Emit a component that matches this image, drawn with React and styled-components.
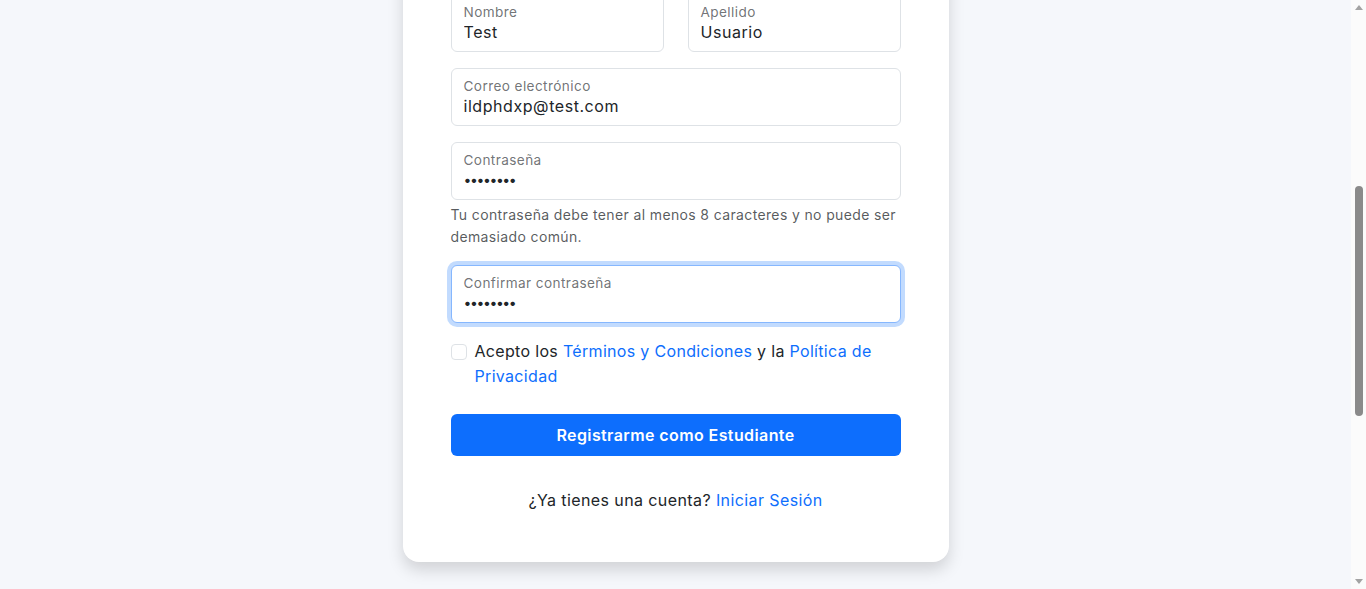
import React, { useEffect, useRef } from 'react';
import styled, { createGlobalStyle } from 'styled-components';

const GlobalStyle = createGlobalStyle`
    html, body {
        margin: 0;
        padding: 0;
    }
    body {
        background: #f5f7fb;
        color: #212529;
        font-family: "Inter", "Noto Sans", sans-serif;
        font-size: 16px;
        line-height: 1.6;
        letter-spacing: 0.02em;
    }
    *, *::before, *::after {
        box-sizing: border-box;
    }
`

const Page = styled.main`
    padding: 48px 15px 431px 0;
    display: flex;
    justify-content: center;
`

const Card = styled.div`
    width: 546px;
    background: #fff;
    border-radius: 16px;
    padding: 48px;
    box-shadow: 0 8px 16px rgba(0, 0, 0, 0.15);
`

const Header = styled.div`
    height: 320px;
    margin-bottom: 16px;
    display: flex;
    flex-direction: column;
    align-items: center;
    text-align: center;
`

const Logo = styled.div`
    width: 72px;
    height: 72px;
    border-radius: 50%;
    background: #e7f0ff;
    color: #0d6efd;
    display: flex;
    align-items: center;
    justify-content: center;
    margin: 24px 0 20px;
`

const Title = styled.h2`
    margin: 0 0 8px;
    font-size: 28px;
    font-weight: 600;
    line-height: 1.2;
`

const Subtitle = styled.p`
    margin: 0 0 24px;
    color: #6c757d;
`

const Pill = styled.span`
    padding: 6px 16px;
    border-radius: 999px;
    background: #e7f0ff;
    color: #0d6efd;
    font-size: 14px;
    font-weight: 500;
`

const Row = styled.div`
    display: grid;
    grid-template-columns: minmax(0, 1fr) minmax(0, 1fr);
    gap: 24px;
    margin-bottom: 16px;
`

const Field = styled.label`
    display: flex;
    flex-direction: column;
    min-width: 0;
    height: 58px;
    padding: 9px 12px 7px;
    border: 1px solid ${props => props.$focused ? '#86b7fe' : '#dee2e6'};
    border-radius: 6px;
    background: #fff;
    box-shadow: ${props => props.$focused ? '0 0 0 4px rgba(13, 110, 253, 0.25)' : 'none'};
    margin-bottom: ${props => props.$mb ?? 16}px;
    cursor: text;
`

const FieldLabel = styled.span`
    font-size: 13.6px;
    line-height: 16px;
    letter-spacing: 0.03em;
    color: rgba(33, 37, 41, 0.65);
`

const Input = styled.input`
    width: 100%;
    min-width: 0;
    border: none;
    outline: none;
    padding: 0;
    margin: 0;
    height: 24px;
    font-family: inherit;
    font-size: ${props => props.type === 'password' ? '14px' : '16px'};
    letter-spacing: ${props => props.type === 'password' ? '-1.4px' : '0.035em'};
    line-height: 24px;
    color: #212529;
    background: transparent;
    caret-color: #212529;
`

const Help = styled.div`
    margin: 4px 0 16px;
    font-size: 14px;
    letter-spacing: 0.026em;
    color: rgba(33, 37, 41, 0.75);
`

const CheckRow = styled.div`
    display: flex;
    align-items: flex-start;
    gap: 8px;
    margin-bottom: 24px;
`

const Check = styled.input`
    appearance: none;
    flex: none;
    width: 16px;
    height: 16px;
    margin: 5px 0 0;
    border: 1px solid #dee2e6;
    border-radius: 4px;
    background: #fff;
`

const Link = styled.a`
    color: #0d6efd;
    text-decoration: none;
`

const Button = styled.button`
    width: 100%;
    height: 42px;
    padding: 8px 12px;
    border: none;
    border-radius: 6px;
    background: #0d6efd;
    color: #fff;
    font: inherit;
    font-weight: 600;
    letter-spacing: 0.025em;
    line-height: 1.5;
    cursor: pointer;
`

const Footer = styled.p`
    margin: 32px 0 0;
    text-align: center;
    letter-spacing: 0.025em;
`

const Scrollbar = styled.div`
    position: fixed;
    top: 0;
    right: 0;
    bottom: 0;
    width: 15px;
    background: #fbfbfb;
    display: flex;
    flex-direction: column;
    align-items: center;
`

const Arrow = styled.div`
    flex: none;
    height: 15px;
    display: flex;
    align-items: center;
    justify-content: center;
    &::before {
        content: "";
        border-left: 4.5px solid transparent;
        border-right: 4.5px solid transparent;
        ${props => props.$down
            ? 'border-top: 5px solid #a3a3a3;'
            : 'border-bottom: 5px solid #a3a3a3;'}
    }
`

const Track = styled.div`
    flex: 1;
    width: 100%;
    display: flex;
    justify-content: center;
`

const Thumb = styled.div`
    width: 8px;
    height: 230px;
    margin-top: 171px;
    border-radius: 4px;
    background: #8a8a8a;
`

function App() {
    const confirmRef = useRef(null);
    const firstRef = useRef(null);

    useEffect(() => {
        if (confirmRef.current) confirmRef.current.focus({ preventScroll: true });
        if (firstRef.current) {
            const top = firstRef.current.getBoundingClientRect().top + window.scrollY;
            window.scrollTo(0, top + 6);
        }
    }, []);

    return (
        <>
            <GlobalStyle />
            <Page>
                <Card>
                    <Header>
                        <Logo>
                            <svg width="34" height="34" viewBox="0 0 24 24" fill="none" stroke="currentColor" strokeWidth="2" strokeLinecap="round" strokeLinejoin="round">
                                <path d="M22 10 12 5 2 10l10 5 10-5z" />
                                <path d="M6 12v5c3 3 9 3 12 0v-5" />
                            </svg>
                        </Logo>
                        <Title>Crear cuenta</Title>
                        <Subtitle>Únete como estudiante y comienza a aprender</Subtitle>
                        <Pill>Estudiante</Pill>
                    </Header>

                    <Row ref={firstRef}>
                        <Field $mb={0}>
                            <FieldLabel>Nombre</FieldLabel>
                            <Input type="text" defaultValue="Test" />
                        </Field>
                        <Field $mb={0}>
                            <FieldLabel>Apellido</FieldLabel>
                            <Input type="text" defaultValue="Usuario" />
                        </Field>
                    </Row>

                    <Field>
                        <FieldLabel>Correo electrónico</FieldLabel>
                        <Input type="email" defaultValue="ildphdxp@test.com" />
                    </Field>

                    <Field $mb={0}>
                        <FieldLabel>Contraseña</FieldLabel>
                        <Input type="password" defaultValue="12345678" />
                    </Field>
                    <Help>Tu contraseña debe tener al menos 8 caracteres y no puede ser demasiado común.</Help>

                    <Field $focused>
                        <FieldLabel>Confirmar contraseña</FieldLabel>
                        <Input ref={confirmRef} type="password" defaultValue="12345678" />
                    </Field>

                    <CheckRow>
                        <Check type="checkbox" />
                        <span>
                            Acepto los <Link href="#">Términos y Condiciones</Link> y la <Link href="#">Política de Privacidad</Link>
                        </span>
                    </CheckRow>

                    <Button type="submit">Registrarme como Estudiante</Button>

                    <Footer>
                        ¿Ya tienes una cuenta? <Link href="#">Iniciar Sesión</Link>
                    </Footer>
                </Card>
            </Page>
            <Scrollbar aria-hidden="true">
                <Arrow />
                <Track>
                    <Thumb />
                </Track>
                <Arrow $down />
            </Scrollbar>
        </>
    );
}

export default App
